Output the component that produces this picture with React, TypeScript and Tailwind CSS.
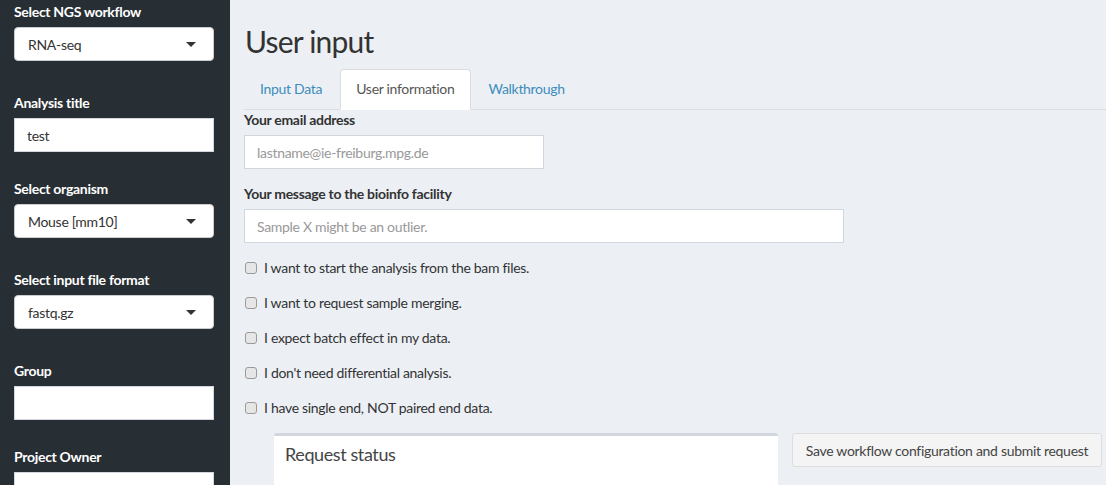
import { useState } from "react";

const font = { fontFamily: "Lato, 'Noto Sans', sans-serif" };

function Caret() {
  return (
    <svg width="10" height="5" viewBox="0 0 10 5" className="shrink-0">
      <path d="M0 0h10L5 5z" fill="#333" />
    </svg>
  );
}

function SideSelect({ label, value }: { label: string; value: string }) {
  return (
    <div className="mb-[32px]">
      <label className="block h-5 leading-5 mb-[5px] font-bold text-white text-[14px] tracking-[-0.3px]">{label}</label>
      <div className="flex h-[34px] items-center justify-between rounded-[4px] border border-[#ccc] bg-white pl-[13px] pr-[17px] text-[14px] tracking-[-0.3px] text-[#333]">
        <span>{value}</span>
        <Caret />
      </div>
    </div>
  );
}

function SideInput({ label, value }: { label: string; value?: string }) {
  return (
    <div className="mb-[27px]">
      <label className="block h-5 leading-5 mb-[5px] font-bold text-white text-[14px] tracking-[-0.3px]">{label}</label>
      <div className="flex h-[34px] items-center border border-[#d2d6de] bg-white px-[12px] text-[14px] tracking-[-0.3px] text-[#333]">
        {value}
      </div>
    </div>
  );
}

function Check({ label }: { label: string }) {
  const [on, setOn] = useState(false);
  return (
    <label className="mb-[15px] flex h-5 cursor-pointer items-center gap-[7px] text-[14px] leading-5 tracking-[-0.3px] text-[#333]" onClick={() => setOn(!on)}>
      <span className="ml-px h-[12px] w-[12px] rounded-[3px] border border-[#9a9a9a] bg-[#e6e6e6]">
        {on && <span className="block h-full w-full rounded-[2px] bg-[#3c8dbc]" />}
      </span>
      <span>{label}</span>
    </label>
  );
}

export default function App() {
  const tabs = ["Input Data", "User information", "Walkthrough"];
  const [active, setActive] = useState(1);

  return (
    <div className="flex h-[485px] w-full overflow-hidden" style={font}>
      {/* sidebar */}
      <aside className="w-[230px] shrink-0 bg-[#272e34] pl-[14px] pr-[16px] pt-[2px]">
        <SideSelect label="Select NGS workflow" value="RNA-seq" />
        <SideInput label="Analysis title" value="test" />
        <SideSelect label="Select organism" value="Mouse [mm10]" />
        <SideSelect label="Select input file format" value="fastq.gz" />
        <SideInput label="Group" />
        <SideInput label="Project Owner" />
      </aside>

      {/* content */}
      <main className="flex-1 bg-[#ecf0f5] pl-[14px]">
        <h2 className="mt-[25px] mb-[11px] pl-px text-[30px] leading-[33px] tracking-[-0.8px] text-[#333]">User input</h2>

        <nav className="flex border-b border-[#ddd]">
          {tabs.map((t, i) => (
            <button
              key={t}
              type="button"
              onClick={() => setActive(i)}
              className={
                i === active
                  ? "-mb-px mr-[2px] rounded-t-[4px] border border-[#ddd] border-b-transparent bg-white px-[15px] pt-[9px] pb-[10px] text-[14px] leading-5 tracking-[-0.3px] text-[#555]"
                  : "mr-[2px] border border-transparent px-[15px] pt-[9px] pb-[9px] text-[14px] leading-5 tracking-[-0.3px] text-[#3c8dbc]"
              }
            >
              {t}
            </button>
          ))}
        </nav>

        <div className="mb-[15px]">
          <label className="block h-5 leading-5 mb-[5px] text-[14px] font-bold tracking-[-0.3px] text-[#333]">Your email address</label>
          <div className="flex h-[34px] w-[300px] items-center border border-[#d2d6de] bg-white px-[12px] text-[14px] tracking-[-0.3px] text-[#999]">
            lastname@ie-freiburg.mpg.de
          </div>
        </div>

        <div className="mb-[15px]">
          <label className="block h-5 leading-5 mb-[5px] text-[14px] font-bold tracking-[-0.3px] text-[#333]">Your message to the bioinfo facility</label>
          <div className="flex h-[34px] w-[600px] items-center border border-[#d2d6de] bg-white px-[12px] text-[14px] tracking-[-0.3px] text-[#999]">
            Sample X might be an outlier.
          </div>
        </div>

        <Check label="I want to start the analysis from the bam files." />
        <Check label="I want to request sample merging." />
        <Check label="I expect batch effect in my data." />
        <Check label="I don't need differential analysis." />
        <Check label="I have single end, NOT paired end data." />

        <div className="flex items-start pl-[30px]">
          <div className="h-[80px] w-[504px] rounded-t-[3px] border-t-[3px] border-[#d2d6de] bg-white px-[11px] pt-[8px]">
            <h3 className="text-[18px] leading-[20px] tracking-[-0.4px] text-[#444]">Request status</h3>
          </div>
          <button
            type="button"
            className="ml-[14px] h-[34px] w-[310px] whitespace-nowrap rounded-[3px] border border-[#ddd] bg-[#f4f4f4] px-[12px] text-[14px] tracking-[-0.3px] text-[#444]"
          >
            Save workflow configuration and submit request
          </button>
        </div>
      </main>
    </div>
  );
}
